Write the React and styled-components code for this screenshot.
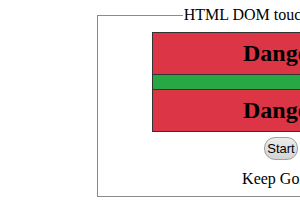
import React from 'react'
import styled, { createGlobalStyle } from 'styled-components'

const Global = createGlobalStyle`
  html, body {
    margin: 0;
    overflow: hidden;
    background: #fff;
  }
  body {
    font-family: "Liberation Serif", "Times New Roman", serif;
    color: #000;
  }
`

const Page = styled.div`
  width: 600px;
  padding: 6px 0 0 97px;
`

const Fieldset = styled.fieldset`
  width: 368px;
  box-sizing: border-box;
  margin: 0;
  padding: 8px 0 7px;
  border: 1px solid #8a8a8a;
  text-align: center;
`

const Legend = styled.legend`
  font-size: 16px;
  line-height: 18px;
  padding: 0 1px;
  margin: 0 auto;
`

const DangerBox = styled.div`
  width: 256px;
  margin: 0 auto;
  border: 1px solid #333;
`

const Zone = styled.div`
  height: ${({ h }) => h}px;
  background: ${({ color }) => color};
  border-top: ${({ divider }) => (divider ? '1px solid #333' : 'none')};
  display: flex;
  align-items: center;
  justify-content: center;
`

const Title = styled.h2`
  margin: 0;
  font-size: 24px;
  font-weight: bold;
`

const StartButton = styled.button`
  margin-top: 5px;
  height: 23px;
  padding: 0 2px;
  font-family: "Liberation Sans", Arial, sans-serif;
  font-size: 13px;
  color: #000;
  border: 1px solid #a0a0a0;
  border-radius: 11px;
  background: linear-gradient(#ececec, #d4d4d4);
`

const Status = styled.p`
  margin: 9px 0 0;
  font-size: 16px;
  line-height: 20px;
`

export default function App() {
  return (
    <>
      <Global />
      <Page>
        <Fieldset>
          <Legend>HTML DOM touchstart Event</Legend>
          <DangerBox>
            <Zone h={41} color="#dc3545">
              <Title>Danger</Title>
            </Zone>
            <Zone h={14} color="#28a745" divider />
            <Zone h={41} color="#dc3545" divider>
              <Title>Danger</Title>
            </Zone>
          </DangerBox>
          <StartButton>Start</StartButton>
          <Status>Keep Going</Status>
        </Fieldset>
      </Page>
    </>
  )
}
